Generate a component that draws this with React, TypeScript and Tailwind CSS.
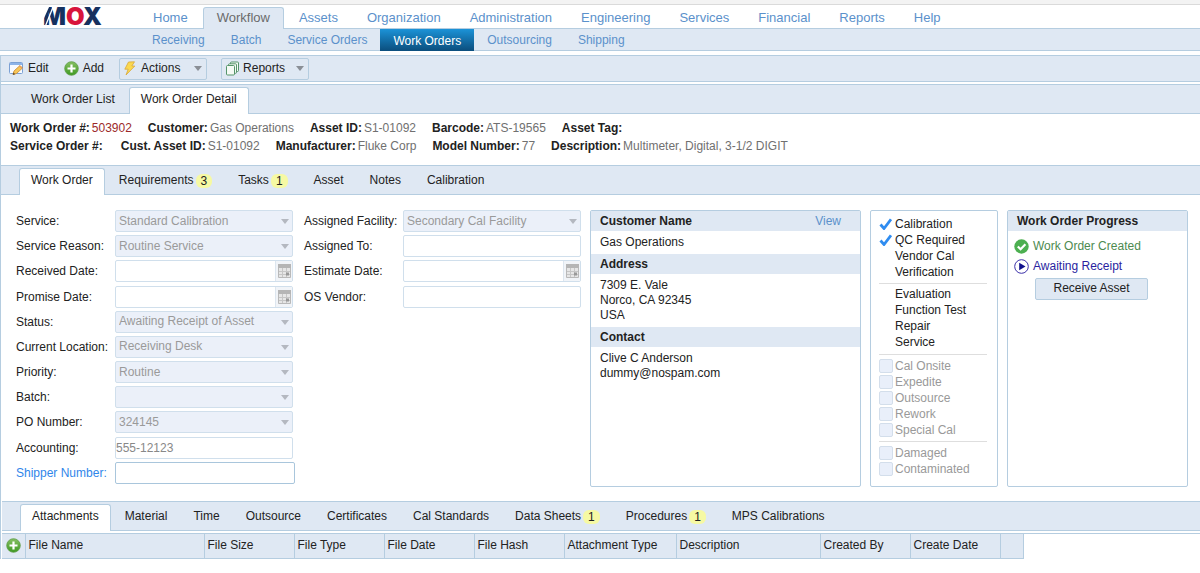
import type { ReactNode } from 'react';

interface TabItem {
  label: string;
  count?: number;
}

interface Field {
  id: string;
  label: string;
  kind: 'select' | 'text' | 'date';
  value?: string;
  highlight?: boolean;
}

const mainNav = [
  'Home',
  'Workflow',
  'Assets',
  'Organization',
  'Administration',
  'Engineering',
  'Services',
  'Financial',
  'Reports',
  'Help',
];

const subNav = ['Receiving', 'Batch', 'Service Orders', 'Work Orders', 'Outsourcing', 'Shipping'];

const pageTabs: TabItem[] = [{ label: 'Work Order List' }, { label: 'Work Order Detail' }];

const detailTabs: TabItem[] = [
  { label: 'Work Order' },
  { label: 'Requirements', count: 3 },
  { label: 'Tasks', count: 1 },
  { label: 'Asset' },
  { label: 'Notes' },
  { label: 'Calibration' },
];

const bottomTabs: TabItem[] = [
  { label: 'Attachments' },
  { label: 'Material' },
  { label: 'Time' },
  { label: 'Outsource' },
  { label: 'Certificates' },
  { label: 'Cal Standards' },
  { label: 'Data Sheets', count: 1 },
  { label: 'Procedures', count: 1 },
  { label: 'MPS Calibrations' },
];

const summary = [
  [
    { label: 'Work Order #:', value: '503902', red: true },
    { label: 'Customer:', value: 'Gas Operations' },
    { label: 'Asset ID:', value: 'S1-01092' },
    { label: 'Barcode:', value: 'ATS-19565' },
    { label: 'Asset Tag:', value: '' },
  ],
  [
    { label: 'Service Order #:', value: '' },
    { label: 'Cust. Asset ID:', value: 'S1-01092' },
    { label: 'Manufacturer:', value: 'Fluke Corp' },
    { label: 'Model Number:', value: '77' },
    { label: 'Description:', value: 'Multimeter, Digital, 3-1/2 DIGIT' },
  ],
];

const leftFields: Field[] = [
  { id: 'service', label: 'Service:', kind: 'select', value: 'Standard Calibration' },
  { id: 'reason', label: 'Service Reason:', kind: 'select', value: 'Routine Service' },
  { id: 'received', label: 'Received Date:', kind: 'date' },
  { id: 'promise', label: 'Promise Date:', kind: 'date' },
  { id: 'status', label: 'Status:', kind: 'select', value: 'Awaiting Receipt of Asset' },
  { id: 'location', label: 'Current Location:', kind: 'select', value: 'Receiving Desk' },
  { id: 'priority', label: 'Priority:', kind: 'select', value: 'Routine' },
  { id: 'batch', label: 'Batch:', kind: 'select', value: '' },
  { id: 'po', label: 'PO Number:', kind: 'select', value: '324145' },
  { id: 'accounting', label: 'Accounting:', kind: 'text', value: '555-12123' },
  { id: 'shipper', label: 'Shipper Number:', kind: 'text', highlight: true },
];

const rightFields: Field[] = [
  { id: 'facility', label: 'Assigned Facility:', kind: 'select', value: 'Secondary Cal Facility' },
  { id: 'assigned', label: 'Assigned To:', kind: 'text' },
  { id: 'estimate', label: 'Estimate Date:', kind: 'date' },
  { id: 'vendor', label: 'OS Vendor:', kind: 'text' },
];

const services = [
  { label: 'Calibration', done: true },
  { label: 'QC Required', done: true },
  { label: 'Vendor Cal', done: false },
  { label: 'Verification', done: false },
];

const workTypes = ['Evaluation', 'Function Test', 'Repair', 'Service'];
const flags = ['Cal Onsite', 'Expedite', 'Outsource', 'Rework', 'Special Cal'];
const conditions = ['Damaged', 'Contaminated'];

const columns = [
  { label: 'File Name', width: 'w-[179px]' },
  { label: 'File Size', width: 'w-[90px]' },
  { label: 'File Type', width: 'w-[90px]' },
  { label: 'File Date', width: 'w-[90px]' },
  { label: 'File Hash', width: 'w-[90px]' },
  { label: 'Attachment Type', width: 'w-[112px]' },
  { label: 'Description', width: 'w-[144px]' },
  { label: 'Created By', width: 'w-[90px]' },
  { label: 'Create Date', width: 'w-[90px]' },
];

function Logo() {
  return (
    <svg width="66" height="32" viewBox="0 0 66 32" className="-my-1" role="img" aria-label="MOX">
      <text x="3" y="24" fontFamily="Inter, sans-serif" fontWeight="900" fontSize="24" fill="#16315f">
        M<tspan fill="#d8143c">O</tspan>X
      </text>
      {/* slanted cut on the left side of the M */}
      <path d="M0 26V5h9.500z" fill="#fff" />
      <path d="M5 26 13.500 5" stroke="#fff" strokeWidth="1.300" />
    </svg>
  );
}

function EditIcon() {
  return (
    <svg width="15" height="15" viewBox="0 0 15 15">
      <rect x="0.5" y="1.5" width="13" height="11" rx="1" fill="#f7faff" stroke="#7ba0d4" />
      <path d="M1 2h12v2H1z" fill="#8db4e8" />
      <path d="M4 13.5 5 10l6-5.5 2.500 2.500-6 5.500z" fill="#f7c657" stroke="#c9882c" strokeWidth="0.800" />
      <path d="M3.800 13.800 4.500 11.500l1.700 1.700z" fill="#5c4320" />
      <path d="m10.500 5 2.500 2.500" stroke="#e98c6a" />
    </svg>
  );
}

function AddIcon() {
  return (
    <svg width="15" height="15" viewBox="0 0 15 15">
      <defs>
        <linearGradient id="add-fill" x1="0" y1="0" x2="0" y2="1">
          <stop offset="0" stopColor="#86bf62" />
          <stop offset="1" stopColor="#3f9a22" />
        </linearGradient>
      </defs>
      <circle cx="7.500" cy="7.500" r="6.800" fill="url(#add-fill)" stroke="#5c9c45" strokeWidth="0.800" />
      <path d="M7.500 3.500v8M3.500 7.500h8" stroke="#fff" strokeWidth="2.200" />
    </svg>
  );
}

function BoltIcon() {
  return (
    <svg width="12" height="15" viewBox="0 0 12 15">
      <path
        d="M4.500 1 10.500.8 7.800 5h3L2 14l2.200-5.800H.8z"
        fill="#fbd84f"
        stroke="#d8a83a"
        strokeWidth="0.800"
        strokeLinejoin="round"
      />
    </svg>
  );
}

function ReportsIcon() {
  return (
    <svg width="13" height="15" viewBox="0 0 13 15" fill="#f4faf4" stroke="#55946a">
      <rect x="4.500" y="1" width="8" height="9.500" rx="1" />
      <rect x="2.500" y="2.800" width="8" height="9.500" rx="1" />
      <rect x="0.500" y="4.500" width="8" height="9.500" rx="1" />
    </svg>
  );
}

function Caret({ className }: { className?: string }) {
  return (
    <svg width="8" height="5" viewBox="0 0 8 5" className={className}>
      <path d="M0 0h8L4 5z" fill="currentColor" />
    </svg>
  );
}

function CalendarIcon() {
  return (
    <svg width="13" height="14" viewBox="0 0 13 14">
      <path d="M0.500.5h12v13h-12z" fill="#e6e6e6" stroke="#b9b9b9" />
      <path d="M0 0h13v4H0z" fill="#b5b5b5" />
      <path d="M1 7.500h11M1 10.500h11M4.500 4v9M8.500 4v9" stroke="#c6c6c6" />
      <path d="M8 8.500h3v3H8z" fill="#999" />
    </svg>
  );
}

function CheckIcon() {
  return (
    <svg width="13" height="12" viewBox="0 0 13 12" fill="none">
      <path d="m1.500 6.500 3.500 4L12 1.300" stroke="#2f8cf0" strokeWidth="2.800" />
    </svg>
  );
}

function DoneIcon() {
  return (
    <svg width="15" height="15" viewBox="0 0 15 15">
      <circle cx="7.500" cy="7.500" r="7.200" fill="#4caf50" />
      <path d="m3.800 7.500 2.800 2.800 4.800-5" stroke="#fff" strokeWidth="2.200" fill="none" />
    </svg>
  );
}

function CurrentIcon() {
  return (
    <svg width="15" height="15" viewBox="0 0 15 15">
      <circle cx="7.500" cy="7.500" r="6.800" fill="#fff" stroke="#3a2fa8" />
      <path d="M5.200 3.800 11.500 7.500l-6.300 3.700z" fill="#10108c" />
    </svg>
  );
}

function TabBar({ tabs, active }: { tabs: TabItem[]; active: string }) {
  return (
    <div
      className="flex h-[30px] items-end gap-[2px] border-y border-[#b5cde0] bg-[#dfe8f3] pl-[18px]"
      role="tablist"
    >
      {tabs.map((tab) => (
        <button
          key={tab.label}
          role="tab"
          aria-selected={tab.label === active}
          className={`-mb-px flex h-[27px] items-center gap-[2px] rounded-t-[3px] border border-b-0 px-[11px] pb-[3px] whitespace-nowrap ${
            tab.label === active ? 'border-[#b5cde0] bg-white' : 'border-transparent'
          }`}
        >
          {tab.label}
          {tab.count !== undefined && (
            <span className="rounded-[6px] bg-[#f6f9a3] px-[5px] leading-[14px]">{tab.count}</span>
          )}
        </button>
      ))}
    </div>
  );
}

function Control({ field }: { field: Field }) {
  if (field.kind === 'select') {
    return (
      <div className="relative h-[22px]">
        <select
          id={field.id}
          disabled
          defaultValue={field.value}
          className="h-[22px] w-full appearance-none rounded-[2px] border border-[#d0dfec] bg-[#ebf0f9] px-[3px] text-[#9a9a9a] opacity-100"
        >
          <option value={field.value}>{field.value}</option>
        </select>
        <Caret className="pointer-events-none absolute top-[9px] right-1 text-[#b4b8c0]" />
      </div>
    );
  }
  if (field.kind === 'date') {
    return (
      <div className="flex h-[22px] rounded-[2px] border border-[#d0dfec] bg-white">
        <input id={field.id} type="text" className="min-w-0 flex-1 px-[3px] outline-none" />
        <button
          aria-label={`Pick ${field.label}`}
          className="flex w-[17px] items-center justify-center border-l border-[#dde6ef] bg-[#f1f4f8]"
        >
          <CalendarIcon />
        </button>
      </div>
    );
  }
  return (
    <input
      id={field.id}
      type="text"
      defaultValue={field.value}
      className={`h-[22px] rounded-[2px] border bg-white text-[#888] outline-none ${
        field.highlight ? '-mr-[2px] border-[#a9c6dc]' : 'border-[#d0dfec]'
      }`}
    />
  );
}

function FieldColumn({ fields }: { fields: Field[] }) {
  return (
    <div className="grid grid-cols-[99px_178px] grid-rows-11 items-start">
      {fields.map((field) => (
        <div key={field.id} className="contents">
          <label
            htmlFor={field.id}
            className={`leading-[23px] whitespace-nowrap ${field.highlight ? 'text-[#2f86ea]' : ''}`}
          >
            {field.label}
          </label>
          <Control field={field} />
        </div>
      ))}
    </div>
  );
}

function PanelHeading({ children }: { children: ReactNode }) {
  return <div className="flex h-5 items-center justify-between bg-[#dfe8f3] pr-[19px] pl-[9px]">{children}</div>;
}

function CheckList({ items }: { items: string[] }) {
  return (
    <div className="text-[#999]">
      {items.map((item) => (
        <label key={item} className="flex h-4 items-center gap-[2px]">
          <input
            type="checkbox"
            disabled
            className="size-[14px] appearance-none rounded-[2px] border border-[#d3deeb] bg-[#e9effa]"
          />
          {item}
        </label>
      ))}
    </div>
  );
}

function Divider() {
  return <hr className="my-[3px] mr-[2px] border-t border-[#dedede]" />;
}

export default function App() {
  return (
    <div className="min-h-screen bg-white font-['Liberation_Sans',Arial,sans-serif] text-[12px] leading-[15px] text-[#222]">
      <header>
        <div className="h-[5px] border-b border-[#dadada] bg-[#f3f3f3]" />
        <div className="flex h-6 items-end border-b border-[#b5cde0]">
          <div className="w-[139px] self-center pl-10">
            <Logo />
          </div>
          <nav className="-mb-px flex gap-px text-[13px]">
            {mainNav.map((item) => (
              <a
                key={item}
                href="#"
                className={`flex h-[22px] items-center rounded-t-[3px] border border-b-0 px-[13px] pb-[2px] ${
                  item === 'Workflow'
                    ? 'border-[#b5cde0] bg-[#dfe8f3] text-[#6b6b6b]'
                    : 'border-transparent text-[#5b91cb]'
                }`}
              >
                {item}
              </a>
            ))}
          </nav>
        </div>
        <nav className="flex h-[22px] border-b border-[#b5cde0] bg-[#dfe8f3] pl-[139px]">
          {subNav.map((item) => (
            <a
              key={item}
              href="#"
              className={`flex items-center px-[13px] pt-[2px] ${
                item === 'Work Orders'
                  ? '-mb-px bg-linear-to-b from-[#1c93d8] to-[#0b4e7d] text-white'
                  : 'text-[#5b91cb]'
              }`}
            >
              {item}
            </a>
          ))}
        </nav>
      </header>

      <main className="mt-1 border-l border-[#b5cde0]">
        <div className="flex h-[27px] items-center border-y border-[#b5cde0] bg-[#dfe8f3] pl-2">
          <button className="flex items-center gap-1">
            <EditIcon />
            Edit
          </button>
          <button className="ml-[15px] flex items-center gap-1">
            <AddIcon />
            Add
          </button>
          <button className="ml-[15px] flex h-[22px] w-[88px] items-center rounded-[2px] border border-[#b5cde0] px-1">
            <BoltIcon />
            <span className="ml-[5px]">Actions</span>
            <Caret className="ml-auto text-[#8a8f96]" />
          </button>
          <button className="ml-[14px] flex h-[22px] w-[88px] items-center rounded-[2px] border border-[#b5cde0] px-1">
            <ReportsIcon />
            <span className="ml-1">Reports</span>
            <Caret className="ml-auto text-[#8a8f96]" />
          </button>
        </div>

        <div className="mt-[2px]">
          <TabBar tabs={pageTabs} active="Work Order Detail" />
        </div>

        <div className="pt-[5px] pb-[10px] pl-[9px] leading-[18px]">
          {summary.map((line, i) => (
            <div key={i} className="flex gap-4 whitespace-nowrap">
              {line.map((item) => (
                <div key={item.label} className="flex gap-[2px]">
                  <b>{item.label}</b>
                  <span className={item.red ? 'text-[#9c2a2a]' : 'text-[#707070]'}>{item.value}</span>
                </div>
              ))}
            </div>
          ))}
        </div>

        <TabBar tabs={detailTabs} active="Work Order" />

        <section className="flex gap-[9px] pt-[15px] pr-3 pb-[14px] pl-[15px]">
          <div className="flex gap-[11px]">
            <FieldColumn fields={leftFields} />
            <FieldColumn fields={rightFields} />
          </div>

          <div className="flex-1 rounded-[2px] border border-[#b5cde0]">
            <PanelHeading>
              <b>Customer Name</b>
              <a href="#" className="text-[#5b91cb]">
                View
              </a>
            </PanelHeading>
            <p className="px-[9px] py-1">Gas Operations</p>
            <PanelHeading>
              <b>Address</b>
            </PanelHeading>
            <p className="px-[9px] py-1">
              7309 E. Vale
              <br />
              Norco, CA 92345
              <br />
              USA
            </p>
            <PanelHeading>
              <b>Contact</b>
            </PanelHeading>
            <p className="px-[9px] py-1">
              Clive C Anderson
              <br />
              dummy@nospam.com
            </p>
          </div>

          <div className="w-32 rounded-[2px] border border-[#b5cde0] px-2 pt-[5px] pb-[9px]">
            <ul>
              {services.map((item) => (
                <li key={item.label} className="flex h-4 items-center gap-[2px]">
                  <span className="w-[14px]">{item.done && <CheckIcon />}</span>
                  {item.label}
                </li>
              ))}
            </ul>
            <Divider />
            <ul className="pl-4">
              {workTypes.map((item) => (
                <li key={item} className="h-4">
                  {item}
                </li>
              ))}
            </ul>
            <Divider />
            <CheckList items={flags} />
            <Divider />
            <CheckList items={conditions} />
          </div>

          <div className="w-[181px] rounded-[2px] border border-[#b5cde0]">
            <PanelHeading>
              <b>Work Order Progress</b>
            </PanelHeading>
            <ul className="pt-[5px] pl-[6px]">
              <li className="flex h-5 items-center gap-1 text-[#4d8a50]">
                <DoneIcon />
                Work Order Created
              </li>
              <li className="flex h-5 items-center gap-1 text-[#2a1fa0]">
                <CurrentIcon />
                Awaiting Receipt
              </li>
            </ul>
            <button className="mt-[2px] ml-[27px] h-[22px] w-[113px] rounded-[2px] border border-[#b5cde0] bg-[#dfe8f3] pb-[2px]">
              Receive Asset
            </button>
          </div>
        </section>

        <section className="pl-px">
          <TabBar tabs={bottomTabs} active="Attachments" />
          <div className="mt-[2px] border-t border-[#b5cde0]">
            <table className="table-fixed border-collapse text-left">
              <thead>
                <tr className="h-6 border-b border-[#b5cde0] bg-[#dfe8f3]">
                  <th className="w-[23px] border-r border-[#b5cde0] pl-1">
                    <button aria-label="Add attachment" className="block">
                      <AddIcon />
                    </button>
                  </th>
                  {columns.map((col) => (
                    <th
                      key={col.label}
                      className={`border-r border-[#b5cde0] pl-[3px] font-normal whitespace-nowrap ${col.width}`}
                    >
                      {col.label}
                    </th>
                  ))}
                  <th className="w-[23px] border-r border-[#b5cde0]" />
                </tr>
              </thead>
            </table>
          </div>
        </section>
      </main>
    </div>
  );
}
